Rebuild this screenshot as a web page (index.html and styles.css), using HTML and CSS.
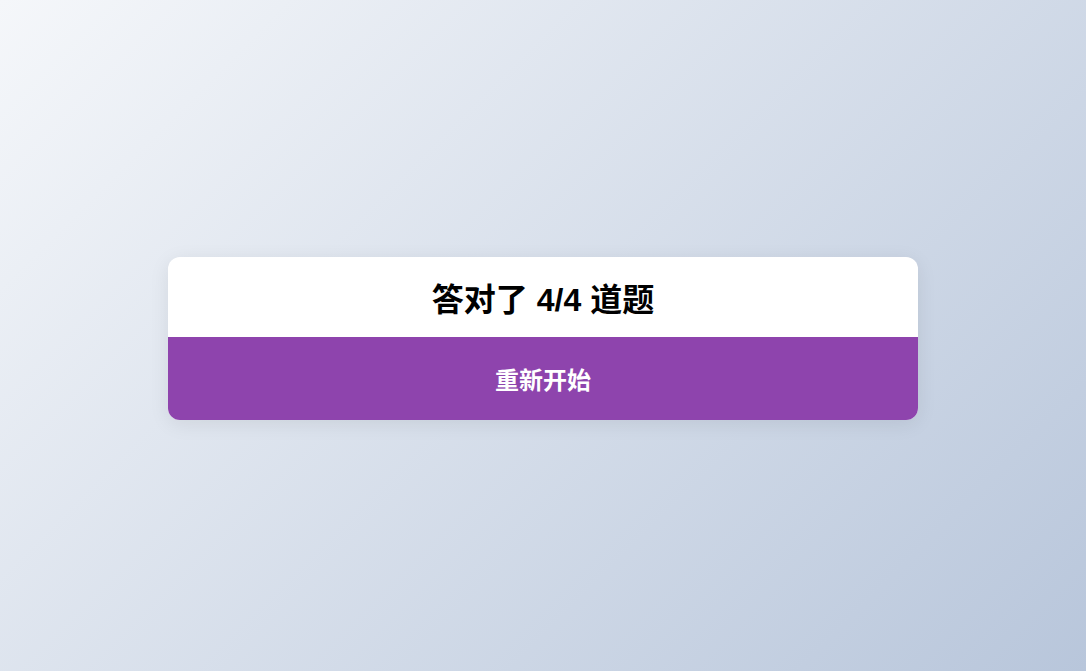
FILE: index.html
```html
<!DOCTYPE html>
<html lang="zh-CN">
<head>
<meta charset="utf-8">
<title>结果</title>
<link rel="stylesheet" href="styles.css">
</head>
<body>
<main class="page">
  <section class="card">
    <h1 class="score">答对了 4/4 道题</h1>
    <button class="restart" type="button">重新开始</button>
  </section>
</main>
</body>
</html>
```
FILE: styles.css
```css
html, body {
  margin: 0;
  padding: 0;
  height: 100%;
}
body {
  font-family: "Liberation Sans", "Noto Sans CJK SC", sans-serif;
  background: linear-gradient(135deg, #f5f7fa 0%, #b8c6db 100%);
  background-attachment: fixed;
}
.page {
  box-sizing: border-box;
  min-height: 100vh;
  display: flex;
  align-items: center;
  justify-content: center;
  padding-top: 6px;
}
.card {
  width: 750px;
  background: #fff;
  border-radius: 12px;
  overflow: hidden;
  box-shadow: 0 4px 20px rgba(0, 0, 0, 0.08);
  display: flex;
  flex-direction: column;
}
.score {
  margin: 0;
  height: 80px;
  display: flex;
  align-items: center;
  justify-content: center;
  font-size: 32px;
  font-weight: bold;
  color: #000;
}
.restart {
  height: 83px;
  border: none;
  margin: 0;
  background: #8e44ad;
  color: #fff;
  font-family: inherit;
  font-size: 24px;
  font-weight: bold;
  cursor: pointer;
}
```
